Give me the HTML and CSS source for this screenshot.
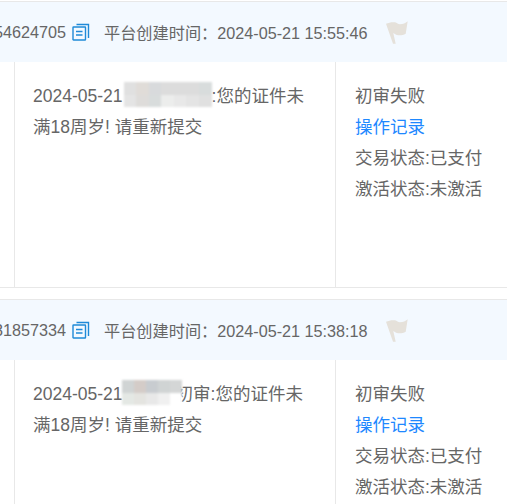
FILE: index.html
```html
<!DOCTYPE html>
<html lang="zh">
<head>
<meta charset="utf-8">
<title>订单列表</title>
<link rel="stylesheet" href="styles.css">
</head>
<body>
<section class="order">
  <header class="order-head">
    <span class="order-no"><span>54624705</span></span>
    <svg class="copy" viewBox="0 0 18 18" aria-hidden="true"><path d="M4.500 1.500H16.500V15"/><rect x="1" y="4" width="12.500" height="13" rx=".5"/><path d="M4 8.500H10.500M4 12H10.500"/></svg>
    <span class="created">平台创建时间：2024-05-21 15:55:46</span>
    <svg class="flag" viewBox="0 0 22 23" aria-hidden="true"><path d="M0 2.700C3 1.500 6 .8 9 1.300C11 1.700 12 3.300 14 3.300C17 3.300 19.500 2 21.700 .3L19.700 12.700C17.500 14 15 14.500 12.300 14.300C10.500 14.100 9 13 7.300 12L9.700 22.700H7Z"/></svg>
  </header>
  <div class="order-body">
    <div class="gutter"></div>
    <div class="remark"><p>2024-05-21<span class="redact r-wide"><span class="mosaic m-wide"><i></i><i></i><i></i><i></i><i></i><i></i><i></i><i></i><i></i><i></i><i></i><i></i><i></i><i></i></span></span>:您的证件未满18周岁! 请重新提交</p></div>
    <div class="status">
      <div>初审失败</div>
      <a href="#">操作记录</a>
      <div>交易状态:已支付</div>
      <div>激活状态:未激活</div>
    </div>
  </div>
</section>
<section class="order">
  <header class="order-head">
    <span class="order-no"><span>31857334</span></span>
    <svg class="copy" viewBox="0 0 18 18" aria-hidden="true"><path d="M4.500 1.500H16.500V15"/><rect x="1" y="4" width="12.500" height="13" rx=".5"/><path d="M4 8.500H10.500M4 12H10.500"/></svg>
    <span class="created">平台创建时间：2024-05-21 15:38:18</span>
    <svg class="flag" viewBox="0 0 22 23" aria-hidden="true"><path d="M0 2.700C3 1.500 6 .8 9 1.300C11 1.700 12 3.300 14 3.300C17 3.300 19.500 2 21.700 .3L19.700 12.700C17.500 14 15 14.500 12.300 14.300C10.500 14.100 9 13 7.300 12L9.700 22.700H7Z"/></svg>
  </header>
  <div class="order-body">
    <div class="gutter"></div>
    <div class="remark"><p>2024-05-21<span class="redact r-narrow"><span class="mosaic m-narrow"><i></i><i></i><i></i><i></i><i></i><i></i><i></i><i></i><i></i><i></i></span></span>初审:您的证件未满18周岁! 请重新提交</p></div>
    <div class="status">
      <div>初审失败</div>
      <a href="#">操作记录</a>
      <div>交易状态:已支付</div>
      <div>激活状态:未激活</div>
    </div>
  </div>
</section>
</body>
</html>
```
FILE: styles.css
```css
html, body { margin: 0; padding: 0; }
body {
  width: 507px;
  height: 504px;
  overflow: hidden;
  background: #fff;
  color: #666;
  font-family: "Liberation Sans", "Noto Sans CJK SC", sans-serif;
  padding-top: 1px;
  box-sizing: border-box;
}
.order { border-bottom: 1px solid #e8e8e8; margin-bottom: 11px; }
.order-head {
  height: 60px;
  border-top: 1px solid #e8e8e8;
  background: #f3f9ff;
  display: flex;
  align-items: center;
  font-size: 16.200px;
  white-space: nowrap;
}
.order-no { width: 66px; display: flex; justify-content: flex-end; overflow: hidden; }
.copy { width: 18px; height: 18px; margin-left: 6px; fill: none; stroke: #1f8ad8; stroke-width: 1.400; flex: none; }
.created { margin-left: 14px; }
.flag { width: 22px; height: 23px; margin-left: 18px; fill: #e5e1da; flex: none; }
.order-body { height: 225px; display: flex; font-size: 17.500px; line-height: 31px; }
.gutter { width: 14px; border-right: 1px solid #e8e8e8; flex: none; }
.remark { width: 321px; padding: 19px 25px 0 18px; box-sizing: border-box; border-right: 1px solid #e8e8e8; flex: none; }
.remark p { margin: 0; }
.redact { display: inline-block; position: relative; height: 1px; }
.r-wide { width: 89px; }
.r-narrow { width: 53px; }
.mosaic {
  position: absolute;
  display: grid;
  grid-auto-rows: 12.500px;
  filter: blur(1.200px);
}
.m-wide { left: 1px; top: -19px; width: 88px; grid-template-columns: repeat(7, 1fr); }
.m-narrow { left: -1px; top: -19px; width: 60px; grid-template-columns: repeat(5, 1fr); }
.m-wide i:nth-child(1) { background: #e0e0e0; }
.m-wide i:nth-child(2) { background: #e0dcd8; }
.m-wide i:nth-child(3) { background: #d8dadc; }
.m-wide i:nth-child(4) { background: #dcdcdc; }
.m-wide i:nth-child(5) { background: #dcdcdc; }
.m-wide i:nth-child(6) { background: #dcdcdc; }
.m-wide i:nth-child(7) { background: #d8dcdc; }
.m-wide i:nth-child(8) { background: #e4e4e4; }
.m-wide i:nth-child(9) { background: #dedcda; }
.m-wide i:nth-child(10) { background: #d8dcdc; }
.m-wide i:nth-child(11) { background: #ecedec; }
.m-wide i:nth-child(12) { background: #e8e8e8; }
.m-wide i:nth-child(13) { background: #e4e4e4; }
.m-wide i:nth-child(14) { background: #e0e0e0; }
.m-narrow i:nth-child(1) { background: #d0d4d4; }
.m-narrow i:nth-child(2) { background: #d4ccc8; }
.m-narrow i:nth-child(3) { background: #c8ccd0; }
.m-narrow i:nth-child(4) { background: #d0d4d4; }
.m-narrow i:nth-child(5) { background: #d4d6d6; }
.m-narrow i:nth-child(6) { background: #e4e8e4; }
.m-narrow i:nth-child(7) { background: #e4e4e0; }
.m-narrow i:nth-child(8) { background: #e8e8e8; }
.m-narrow i:nth-child(9) { background: #f0f0f0; }
.m-narrow i:nth-child(10) { background: #fff; }
.status { padding: 19px 0 0 19px; white-space: nowrap; }
.status a { display: block; color: #1e88ff; text-decoration: none; }
```
